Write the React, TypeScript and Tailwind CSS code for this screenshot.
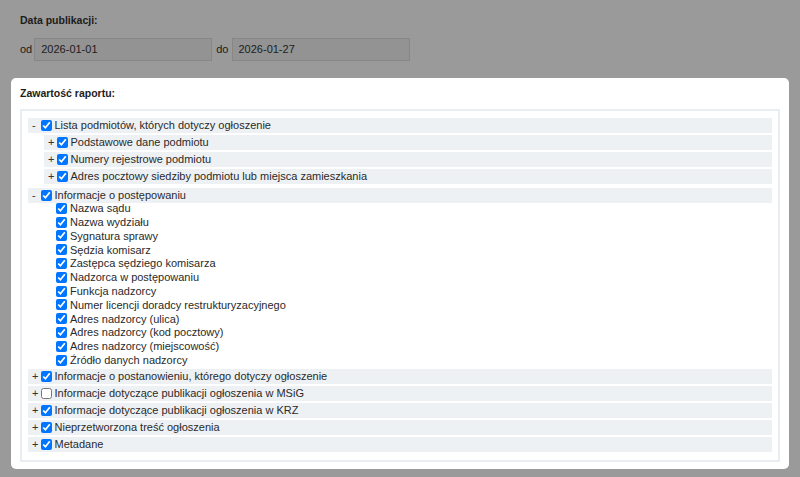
type Node = {
  label: string;
  checked?: boolean;
  children?: Node[];
  expanded?: boolean;
};

const tree: Node[] = [
  {
    label: "Lista podmiotów, których dotyczy ogłoszenie",
    expanded: true,
    children: [
      { label: "Podstawowe dane podmiotu", children: [] },
      { label: "Numery rejestrowe podmiotu", children: [] },
      { label: "Adres pocztowy siedziby podmiotu lub miejsca zamieszkania", children: [] },
    ],
  },
  {
    label: "Informacje o postępowaniu",
    expanded: true,
    children: [
      { label: "Nazwa sądu" },
      { label: "Nazwa wydziału" },
      { label: "Sygnatura sprawy" },
      { label: "Sędzia komisarz" },
      { label: "Zastępca sędziego komisarza" },
      { label: "Nadzorca w postępowaniu" },
      { label: "Funkcja nadzorcy" },
      { label: "Numer licencji doradcy restrukturyzacyjnego" },
      { label: "Adres nadzorcy (ulica)" },
      { label: "Adres nadzorcy (kod pocztowy)" },
      { label: "Adres nadzorcy (miejscowość)" },
      { label: "Źródło danych nadzorcy" },
    ],
  },
  { label: "Informacje o postanowieniu, którego dotyczy ogłoszenie", children: [] },
  { label: "Informacje dotyczące publikacji ogłoszenia w MSiG", checked: false, children: [] },
  { label: "Informacje dotyczące publikacji ogłoszenia w KRZ", children: [] },
  { label: "Nieprzetworzona treść ogłoszenia", children: [] },
  { label: "Metadane", children: [] },
];

function Check({ checked = true }: { checked?: boolean }) {
  return (
    <input
      type="checkbox"
      defaultChecked={checked}
      className="m-0 mr-[3px] h-[11px] w-[11px] shrink-0"
    />
  );
}

function TreeRow({ node }: { node: Node }) {
  const isBranch = node.children !== undefined;

  if (!isBranch) {
    return (
      <div className="flex h-[13.8px] items-center">
        <span className="w-[12px] shrink-0" />
        <Check checked={node.checked} />
        <span>{node.label}</span>
      </div>
    );
  }

  const hasLeaves = node.children?.some((c) => c.children === undefined);

  return (
    <div className="mb-[2px]">
      <div className="flex h-[15px] items-center bg-[#eef1f4]">
        <span className="w-[12.5px] shrink-0 pl-[4px] text-[#333]">
          {node.expanded ? "-" : "+"}
        </span>
        <Check checked={node.checked} />
        <span>{node.label}</span>
      </div>
      {node.expanded && node.children && (
        <div
          className={
            hasLeaves
              ? "-mt-[1px] ml-[16px] flex flex-col"
              : "ml-[16px] mt-[2px] flex flex-col"
          }
        >
          {node.children.map((child) => (
            <TreeRow key={child.label} node={child} />
          ))}
        </div>
      )}
    </div>
  );
}

export default function App() {
  return (
    <div
      className="h-[477px] w-[800px] overflow-hidden bg-[#9a9a9a] text-[11px] text-[#1c1c1c]"
      style={{ fontFamily: '"Liberation Sans", Arial, sans-serif' }}
    >
      <div className="px-[20px] pt-[13px]">
        <div className="text-[10.5px] font-bold leading-[14px]">Data publikacji:</div>
        <div className="mt-[11px] flex items-center">
          <span className="mr-[2px]">od</span>
          <div className="flex h-[23px] w-[178px] items-center border border-[#878787] bg-[#939393] px-[6px]">
            2026-01-01
          </div>
          <span className="ml-[4px] mr-[3px]">do</span>
          <div className="flex h-[23px] w-[178px] items-center border border-[#878787] bg-[#939393] px-[6px]">
            2026-01-27
          </div>
        </div>
      </div>

      <div className="mx-[11px] mt-[17px] rounded-[5px] bg-white px-[9px] pb-[7px] pt-[8px] text-[#2a2a2a]">
        <div className="text-[10.5px] font-bold leading-[14px] text-[#1c1c1c]">Zawartość raportu:</div>
        <div className="mt-[9px] border-2 border-[#e9edf1] px-[6px] pb-[6px] pt-[6.5px]">
          {tree.map((node) => (
            <TreeRow key={node.label} node={node} />
          ))}
        </div>
      </div>
    </div>
  );
}
